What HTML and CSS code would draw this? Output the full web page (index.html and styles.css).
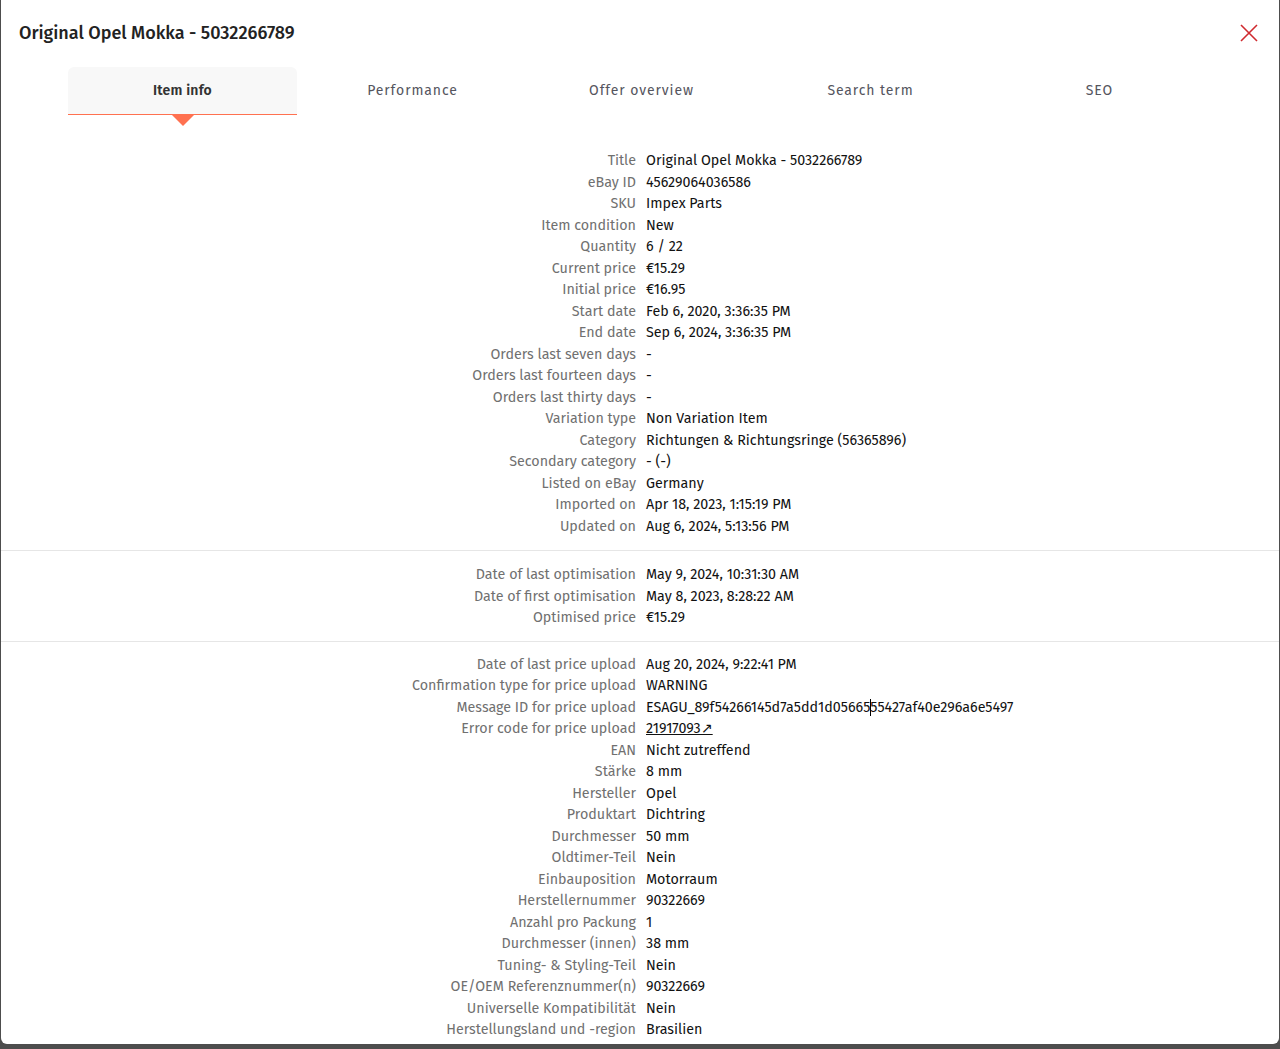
FILE: index.html
```html
<!DOCTYPE html>
<html lang="en">
<head>
  <meta charset="UTF-8">
  <meta name="viewport" content="width=device-width, initial-scale=1.0">
  <title>Original Opel Mokka - 5032266789</title>
  <link rel="stylesheet" href="styles.css">
</head>
<body>
  <div class="modal">
    <div class="modal-header">
      <h1>Original Opel Mokka - 5032266789</h1>
      <button class="close-btn" aria-label="Close">
        <svg width="20" height="20" viewBox="0 0 20 20"><path d="M2 2 L18 18 M18 2 L2 18" stroke="#cf2a2f" stroke-width="1.6" fill="none"/></svg>
      </button>
    </div>

    <div class="tabs">
      <div class="tab active">Item info</div>
      <div class="tab">Performance</div>
      <div class="tab">Offer overview</div>
      <div class="tab">Search term</div>
      <div class="tab">SEO</div>
    </div>

    <div class="section first">
      <div class="row"><span class="label">Title</span><span class="value">Original Opel Mokka - 5032266789</span></div>
      <div class="row"><span class="label">eBay ID</span><span class="value">45629064036586</span></div>
      <div class="row"><span class="label">SKU</span><span class="value">Impex Parts</span></div>
      <div class="row"><span class="label">Item condition</span><span class="value">New</span></div>
      <div class="row"><span class="label">Quantity</span><span class="value">6 / 22</span></div>
      <div class="row"><span class="label">Current price</span><span class="value">€15.29</span></div>
      <div class="row"><span class="label">Initial price</span><span class="value">€16.95</span></div>
      <div class="row"><span class="label">Start date</span><span class="value">Feb 6, 2020, 3:36:35 PM</span></div>
      <div class="row"><span class="label">End date</span><span class="value">Sep 6, 2024, 3:36:35 PM</span></div>
      <div class="row"><span class="label">Orders last seven days</span><span class="value">-</span></div>
      <div class="row"><span class="label">Orders last fourteen days</span><span class="value">-</span></div>
      <div class="row"><span class="label">Orders last thirty days</span><span class="value">-</span></div>
      <div class="row"><span class="label">Variation type</span><span class="value">Non Variation Item</span></div>
      <div class="row"><span class="label">Category</span><span class="value">Richtungen &amp; Richtungsringe (56365896)</span></div>
      <div class="row"><span class="label">Secondary category</span><span class="value">- (-)</span></div>
      <div class="row"><span class="label">Listed on eBay</span><span class="value">Germany</span></div>
      <div class="row"><span class="label">Imported on</span><span class="value">Apr 18, 2023, 1:15:19 PM</span></div>
      <div class="row"><span class="label">Updated on</span><span class="value">Aug 6, 2024, 5:13:56 PM</span></div>
    </div>

    <div class="section optimisation">
      <div class="row"><span class="label">Date of last optimisation</span><span class="value">May 9, 2024, 10:31:30 AM</span></div>
      <div class="row"><span class="label">Date of first optimisation</span><span class="value">May 8, 2023, 8:28:22 AM</span></div>
      <div class="row"><span class="label">Optimised price</span><span class="value">€15.29</span></div>
    </div>

    <div class="section">
      <div class="row"><span class="label">Date of last price upload</span><span class="value">Aug 20, 2024, 9:22:41 PM</span></div>
      <div class="row"><span class="label">Confirmation type for price upload</span><span class="value">WARNING</span></div>
      <div class="row"><span class="label">Message ID for price upload</span><span class="value">ESAGU_89f54266145d7a5dd1d05665<span class="caret"></span>55427af40e296a6e5497</span></div>
      <div class="row"><span class="label">Error code for price upload</span><span class="value"><a href="#" class="ext-link">21917093↗</a></span></div>
      <div class="row"><span class="label">EAN</span><span class="value">Nicht zutreffend</span></div>
      <div class="row"><span class="label">Stärke</span><span class="value">8 mm</span></div>
      <div class="row"><span class="label">Hersteller</span><span class="value">Opel</span></div>
      <div class="row"><span class="label">Produktart</span><span class="value">Dichtring</span></div>
      <div class="row"><span class="label">Durchmesser</span><span class="value">50 mm</span></div>
      <div class="row"><span class="label">Oldtimer-Teil</span><span class="value">Nein</span></div>
      <div class="row"><span class="label">Einbauposition</span><span class="value">Motorraum</span></div>
      <div class="row"><span class="label">Herstellernummer</span><span class="value">90322669</span></div>
      <div class="row"><span class="label">Anzahl pro Packung</span><span class="value">1</span></div>
      <div class="row"><span class="label">Durchmesser (innen)</span><span class="value">38 mm</span></div>
      <div class="row"><span class="label">Tuning- &amp; Styling-Teil</span><span class="value">Nein</span></div>
      <div class="row"><span class="label">OE/OEM Referenznummer(n)</span><span class="value">90322669</span></div>
      <div class="row"><span class="label">Universelle Kompatibilität</span><span class="value">Nein</span></div>
      <div class="row"><span class="label">Herstellungsland und -region</span><span class="value">Brasilien</span></div>
    </div>
  </div>
</body>
</html>
```

FILE: styles.css
```css
body {
  margin: 0;
  padding: 0;
  background-color: #4d4d4d;
  font-family: "Fira Sans", Roboto, "Noto Sans", sans-serif;
  color: #1a1a1a;
}
.modal {
  margin: 0 1px;
  height: 1044px;
  overflow: hidden;
  background: #fff;
  border-radius: 0 0 6px 6px;
}
.modal-header {
  display: flex;
  align-items: center;
  justify-content: space-between;
  height: 66px;
  padding: 0 20px 0 18px;
}
.modal-header h1 {
  margin: 0;
  font-size: 18px;
  font-weight: 500;
  color: #222;
}
.close-btn {
  border: none;
  background: none;
  padding: 0;
  width: 20px;
  height: 20px;
  cursor: pointer;
}
.close-btn svg {
  display: block;
}
.tabs {
  display: grid;
  grid-template-columns: repeat(5, 1fr);
  margin: 1px 66px 0 67px;
}
.tab {
  position: relative;
  height: 47px;
  display: flex;
  align-items: center;
  justify-content: center;
  padding-left: 2px;
  font-size: 14px;
  letter-spacing: 0.9px;
  color: #55555e;
  border-bottom: 1px solid transparent;
}
.tab.active {
  padding-left: 0;
  background: #f8f8f8;
  border-radius: 6px 6px 0 0;
  border-bottom-color: #ff7150;
  font-weight: 600;
  letter-spacing: 0.2px;
  color: #333;
}
.tab.active::after {
  content: "";
  position: absolute;
  top: 100%;
  left: 50%;
  margin-left: -12px;
  border-left: 12px solid transparent;
  border-right: 12px solid transparent;
  border-top: 12px solid #ff7150;
}
.section {
  padding: 12px 0 13px;
  border-top: 1px solid #e6e6e6;
}
.section.first {
  padding-top: 35px;
  border-top: none;
}
.section.optimisation {
  padding: 13px 0 12px;
}
.row {
  display: grid;
  grid-template-columns: 1fr 1fr;
  column-gap: 10px;
  padding-left: 2px;
  font-size: 14.3px;
  line-height: 21.5px;
}
.label {
  text-align: right;
  color: #707070;
  white-space: nowrap;
}
.value {
  color: #111;
  white-space: nowrap;
}
.caret {
  display: inline-block;
  width: 1px;
  height: 17px;
  margin-right: -1px;
  background: #000;
  vertical-align: -4px;
}
.ext-link {
  color: #111;
  text-decoration: underline;
}
```
